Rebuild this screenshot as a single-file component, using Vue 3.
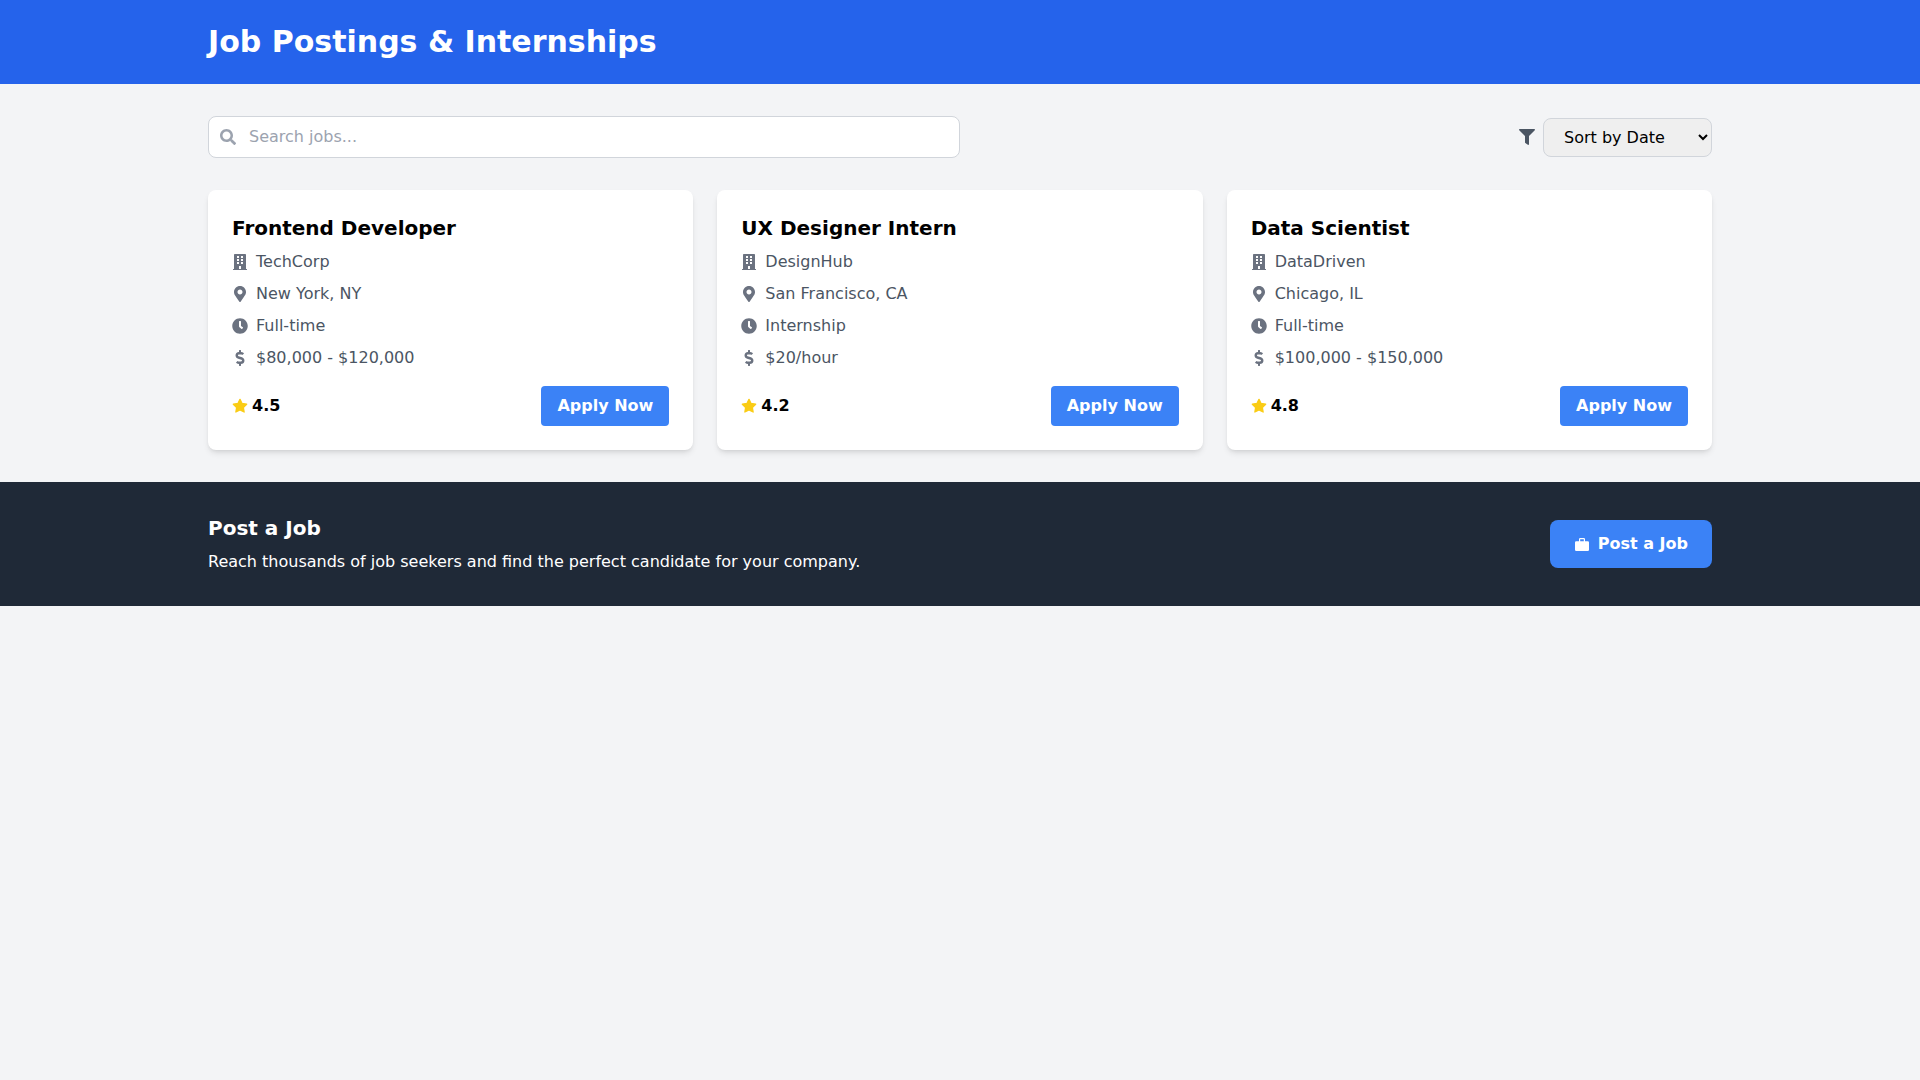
<template>
  <div class="page">
    <header class="top">
      <div class="container">
        <h1>Job Postings &amp; Internships</h1>
      </div>
    </header>

    <main class="container main">
      <div class="toolbar">
        <div class="search">
          <svg class="search-icon" viewBox="0 0 512 512"><path :d="icons.search" /></svg>
          <input type="text" placeholder="Search jobs..." />
        </div>
        <div class="sort">
          <svg class="filter-icon" viewBox="0 0 512 512"><path :d="icons.filter" /></svg>
          <select>
            <option>Sort by Date</option>
            <option>Sort by Rating</option>
          </select>
        </div>
      </div>

      <div class="cards">
        <div class="card" v-for="job in jobs" :key="job.title">
          <h2>{{ job.title }}</h2>
          <div class="row" v-for="item in rows(job)" :key="item.text">
            <svg class="row-icon" :viewBox="item.box"><path :d="item.path" /></svg>
            <span>{{ item.text }}</span>
          </div>
          <div class="card-foot">
            <div class="rating">
              <svg class="star" viewBox="0 0 24 24"><polygon points="12 2 15.09 8.26 22 9.27 17 14.14 18.18 21.02 12 17.77 5.82 21.02 7 14.14 2 9.27 8.91 8.26" /></svg>
              <span>{{ job.rating }}</span>
            </div>
            <button class="apply">Apply Now</button>
          </div>
        </div>
      </div>
    </main>

    <section class="post">
      <div class="container post-inner">
        <div>
          <h3>Post a Job</h3>
          <p>Reach thousands of job seekers and find the perfect candidate for your company.</p>
        </div>
        <button class="post-btn">
          <svg class="bag" viewBox="0 0 16 16"><path fill-rule="evenodd" d="M5 5.200V3.200A1.200 1.200 0 0 1 6.200 2h3.600A1.200 1.200 0 0 1 11 3.200v2h2.800A1.200 1.200 0 0 1 15 6.400v7.400a1.200 1.200 0 0 1-1.200 1.200H2.200A1.200 1.200 0 0 1 1 13.800V6.400a1.200 1.200 0 0 1 1.200-1.200H5zm1.200 0h3.600V3.200H6.200v2z" /></svg>
          Post a Job
        </button>
      </div>
    </section>
  </div>
</template>

<script setup>
const icons = {
  search: 'M505 442.7L405.3 343c-4.5-4.5-10.6-7-17-7H372c27.6-35.3 44-79.7 44-128C416 93.1 322.9 0 208 0S0 93.1 0 208s93.1 208 208 208c48.3 0 92.7-16.4 128-44v16.3c0 6.4 2.5 12.5 7 17l99.7 99.7c9.4 9.4 24.6 9.4 33.9 0l28.3-28.3c9.4-9.4 9.4-24.6.1-34zM208 336c-70.7 0-128-57.2-128-128 0-70.7 57.2-128 128-128 70.7 0 128 57.2 128 128 0 70.7-57.2 128-128 128z',
  filter: 'M487.976 0H24.028C2.71 0-8.047 25.866 7.058 40.971L192 225.941V432c0 7.831 3.821 15.17 10.237 19.662l80 55.98C298.02 518.69 320 507.493 320 487.98V225.941l184.947-184.97C520.021 25.896 509.338 0 487.976 0z',
  building: 'M436 480h-20V24c0-13.255-10.745-24-24-24H56C42.745 0 32 10.745 32 24v456H12c-6.627 0-12 5.373-12 12v20h448v-20c0-6.627-5.373-12-12-12zM128 76c0-6.627 5.373-12 12-12h40c6.627 0 12 5.373 12 12v40c0 6.627-5.373 12-12 12h-40c-6.627 0-12-5.373-12-12V76zm0 96c0-6.627 5.373-12 12-12h40c6.627 0 12 5.373 12 12v40c0 6.627-5.373 12-12 12h-40c-6.627 0-12-5.373-12-12v-40zm52 148h-40c-6.627 0-12-5.373-12-12v-40c0-6.627 5.373-12 12-12h40c6.627 0 12 5.373 12 12v40c0 6.627-5.373 12-12 12zm76 160h-64v-84c0-6.627 5.373-12 12-12h40c6.627 0 12 5.373 12 12v84zm64-172c0 6.627-5.373 12-12 12h-40c-6.627 0-12-5.373-12-12v-40c0-6.627 5.373-12 12-12h40c6.627 0 12 5.373 12 12v40zm0-96c0 6.627-5.373 12-12 12h-40c-6.627 0-12-5.373-12-12v-40c0-6.627 5.373-12 12-12h40c6.627 0 12 5.373 12 12v40zm0-96c0 6.627-5.373 12-12 12h-40c-6.627 0-12-5.373-12-12V76c0-6.627 5.373-12 12-12h40c6.627 0 12 5.373 12 12v40z',
  marker: 'M172.268 501.67C26.97 291.031 0 269.413 0 192 0 85.961 85.961 0 192 0s192 85.961 192 192c0 77.413-26.97 99.031-172.268 309.67-9.535 13.774-29.93 13.773-39.464 0zM192 272c44.183 0 80-35.817 80-80s-35.817-80-80-80-80 35.817-80 80 35.817 80 80 80z',
  clock: 'M256,8C119,8,8,119,8,256S119,504,256,504,504,393,504,256,393,8,256,8Zm92.49,313h0l-20,25a16,16,0,0,1-22.49,2.5h0l-67-49.72a40,40,0,0,1-15-31.23V112a16,16,0,0,1,16-16h32a16,16,0,0,1,16,16V256l58,42.5A16,16,0,0,1,348.49,321Z',
  dollar: 'M209.2 233.4l-108-31.6C88.7 198.2 80 186.5 80 173.5c0-16.3 13.2-29.5 29.5-29.5h66.3c12.2 0 24.2 3.7 34.2 10.5 6.1 4.1 14.3 3.1 19.5-2l34.8-34c7.1-6.9 6.1-18.4-1.8-24.5C238 74.8 207.4 64.1 176 64V16c0-8.8-7.2-16-16-16h-32c-8.8 0-16 7.2-16 16v48h-2.5C45.8 64-5.4 118.7.5 183.6c4.2 46.1 39.4 83.6 83.8 96.6l102.5 30c12.5 3.7 21.2 15.3 21.2 28.3 0 16.3-13.2 29.5-29.5 29.5h-66.3C100 368 88 364.3 78 357.5c-6.1-4.1-14.3-3.1-19.5 2l-34.8 34c-7.1 6.9-6.1 18.4 1.8 24.5 24.5 19.2 55.1 29.9 86.5 30v48c0 8.8 7.2 16 16 16h32c8.8 0 16-7.2 16-16v-48.2c46.6-.9 90.3-28.6 105.7-72.7 21.5-61.6-14.6-124.8-72.5-141.700z'
}

const jobs = [
  { title: 'Frontend Developer', company: 'TechCorp', location: 'New York, NY', type: 'Full-time', pay: '$80,000 - $120,000', rating: 4.5 },
  { title: 'UX Designer Intern', company: 'DesignHub', location: 'San Francisco, CA', type: 'Internship', pay: '$20/hour', rating: 4.2 },
  { title: 'Data Scientist', company: 'DataDriven', location: 'Chicago, IL', type: 'Full-time', pay: '$100,000 - $150,000', rating: 4.8 }
]

const rows = (job) => [
  { text: job.company, path: icons.building, box: '0 0 448 512' },
  { text: job.location, path: icons.marker, box: '0 0 384 512' },
  { text: job.type, path: icons.clock, box: '0 0 512 512' },
  { text: job.pay, path: icons.dollar, box: '0 0 288 512' }
]
</script>

<style>
html, body {
  margin: 0;
  background: #f3f4f6;
}
</style>

<style scoped>
.page {
  min-height: 100vh;
  background: #f3f4f6;
  font-family: "DejaVu Sans", sans-serif;
  font-size: 16px;
  line-height: 24px;
  color: #000;
}

.container {
  box-sizing: border-box;
  width: 1536px;
  margin: 0 auto;
  padding: 0 16px;
}

.top {
  background: #2563eb;
  color: #fff;
  padding: 24px 0;
}

h1 {
  margin: 0;
  font-size: 30px;
  line-height: 36px;
  font-weight: 700;
}

.main {
  padding-top: 32px;
  padding-bottom: 32px;
}

.toolbar {
  display: flex;
  align-items: center;
  justify-content: space-between;
  margin-bottom: 32px;
}

.search {
  position: relative;
  width: 752px;
}

.search input {
  display: block;
  box-sizing: border-box;
  width: 100%;
  padding: 8px 16px 8px 40px;
  border: 1px solid #d1d5db;
  border-radius: 8px;
  background: #fff;
  font: inherit;
  color: #000;
  outline: none;
}

.search input::placeholder {
  color: #9ca3af;
}

.search-icon {
  position: absolute;
  left: 12px;
  top: 13px;
  width: 16px;
  height: 16px;
  fill: #9ca3af;
}

.sort {
  display: flex;
  align-items: center;
  gap: 8px;
}

.filter-icon {
  width: 16px;
  height: 16px;
  fill: #4b5563;
}

.sort select {
  padding: 8px 0 8px 16px;
  width: 169px;
  border: 1px solid #d1d5db;
  border-radius: 8px;
  font-family: inherit;
  font-size: 16px;
  line-height: 24px;
  color: #000;
}

.cards {
  display: grid;
  grid-template-columns: repeat(3, 1fr);
  gap: 24px;
}

.card {
  padding: 24px;
  border-radius: 8px;
  background: #fff;
  box-shadow: 0 4px 6px -1px rgba(0, 0, 0, 0.1), 0 2px 4px -2px rgba(0, 0, 0, 0.1);
}

h2 {
  margin: 0 0 8px;
  font-size: 20px;
  line-height: 28px;
  font-weight: 600;
}

.row {
  display: flex;
  align-items: center;
  margin-bottom: 8px;
  color: #4b5563;
}

.row-icon {
  width: 16px;
  height: 16px;
  margin-right: 8px;
  fill: #6b7280;
  flex-shrink: 0;
}

.card-foot {
  display: flex;
  align-items: center;
  justify-content: space-between;
  margin-top: 16px;
}

.rating {
  display: flex;
  align-items: center;
  font-weight: 700;
}

.star {
  width: 16px;
  height: 16px;
  margin-right: 4px;
  fill: #facc15;
  stroke: #facc15;
  stroke-width: 2;
  stroke-linejoin: round;
}

.apply {
  padding: 8px 16px;
  border: none;
  border-radius: 4px;
  background: #3b82f6;
  color: #fff;
  font: inherit;
  font-weight: 600;
}

.post {
  background: #1f2937;
  color: #fff;
  padding: 32px 0;
}

.post-inner {
  display: flex;
  align-items: center;
  justify-content: space-between;
}

h3 {
  margin: 0 0 8px;
  font-size: 20px;
  line-height: 28px;
  font-weight: 600;
}

.post p {
  margin: 0;
}

.post-btn {
  display: flex;
  align-items: center;
  padding: 12px 24px;
  border: none;
  border-radius: 8px;
  background: #3b82f6;
  color: #fff;
  font: inherit;
  font-weight: 600;
}

.bag {
  width: 16px;
  height: 16px;
  margin-right: 8px;
  fill: #fff;
}
</style>
